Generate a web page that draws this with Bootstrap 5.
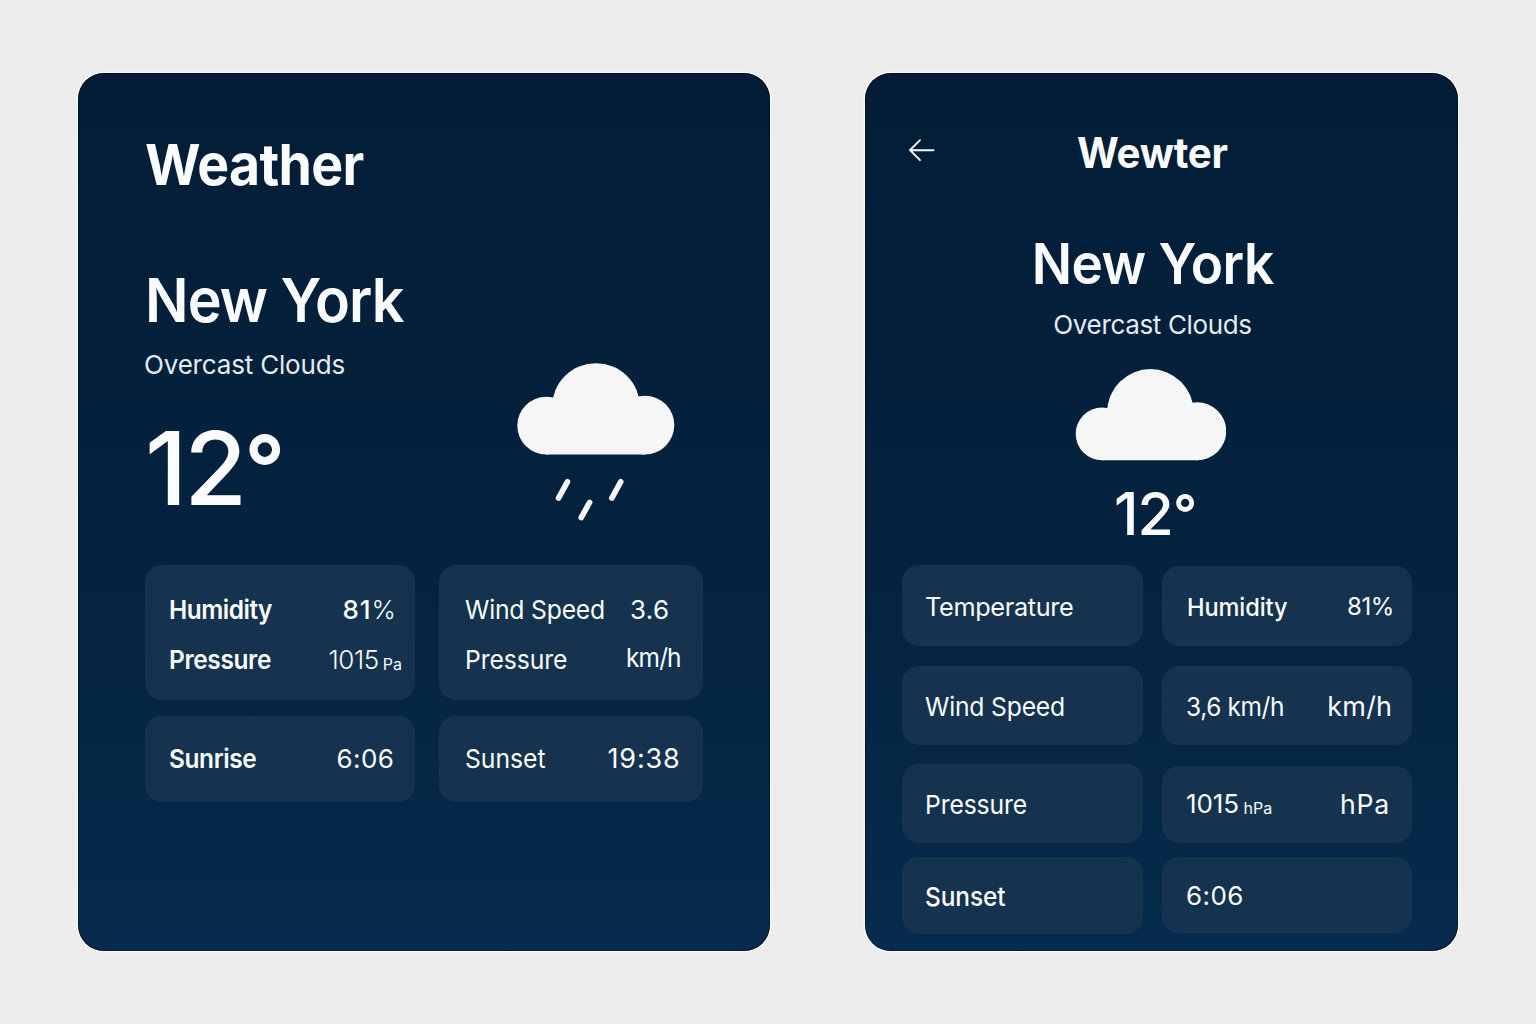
<!DOCTYPE html>
<html lang="en">
<head>
<meta charset="utf-8">
<meta name="viewport" content="width=device-width, initial-scale=1">
<title>Weather</title>
<link href="https://cdn.jsdelivr.net/npm/bootstrap@5.3.0/dist/css/bootstrap.min.css" rel="stylesheet">
<style>
body{width:1536px;height:1024px;background:#ececec;font-family:Inter,"Liberation Sans",sans-serif;font-size:26px;line-height:30px;color:#fafbfc;overflow:hidden}
.stage{padding:73px 0 0 78px;gap:95px}
.panel{height:878px;border-radius:26px;background:linear-gradient(180deg,#031d36 0%,#04213d 45%,#072b4c 100%);box-shadow:0 0 0 1.5px #f6f6f6,inset 0 0 0 1px rgba(0,6,28,.5)}
.panel-wide{width:692px;padding:62px 67px 0}
.panel-slim{width:592.5px;padding:49px 45.5px 0 37px}
.panel h1,.panel h2,.panel p{margin:0;white-space:nowrap}
.tile{background:#15334f;border-radius:17px;white-space:nowrap;box-shadow:inset 0 0 0 1px rgba(255,255,255,.012)}
.tile span{display:block}
.w3{font-weight:300}.w5{font-weight:500}.w6{font-weight:600}
.panel .sky{color:#e3ebf1;font-weight:400;line-height:32px;letter-spacing:-.18px}
.unit{font-size:16px;line-height:20px}
/* condensed lettering */
.slim-type{transform:scaleX(.94);transform-origin:0 50%}
.slim-type-mid{transform:scaleX(.95);transform-origin:0 50%}
.ring{font-size:.88em;line-height:0;vertical-align:.058em;font-weight:600}

/* wide panel */
.app-name{font-size:57px;font-weight:700;line-height:60px;letter-spacing:-.7px}
.panel-wide .city{font-size:61px;font-weight:600;line-height:64px;letter-spacing:-.95px;padding-top:73px;margin-left:-.5px}
.panel-wide .sky{padding-top:16.5px;margin-left:-1px}
.panel-wide .degrees{font-size:102px;font-weight:500;line-height:104px;letter-spacing:-3px;padding-top:35.5px}
.rain{width:160px;height:160px;margin:227px 27px 0 0}
.wide-grid{display:grid;grid-template-columns:270px 264.5px;grid-template-rows:135px 86px;gap:15.5px 23.5px;margin-top:43px}
.wide-grid .tile{padding-left:24px;display:flex;flex-direction:column;justify-content:center}
.wide-grid .right-col{padding-left:26.5px}
.line{display:flex;align-items:center;height:50px}
.tile.two{padding-top:4px}
.line>:first-child{flex:none}

/* slim panel */
.back{width:27px;height:24px;margin:16px 0 0 6px}
.app-name-sm{font-size:42px;font-weight:700;line-height:61px;letter-spacing:-.3px;padding-left:142px}
.app-name-sm span{display:inline-block;transform:scaleX(.96);transform-origin:0 50%}
.panel-slim .city{font-size:56.5px;font-weight:600;line-height:60px;letter-spacing:-.55px;transform:scaleX(.94)}
.panel-slim .sky{letter-spacing:-.35px;margin-top:15px}
.panel-slim .degrees{font-size:59px;font-weight:500;line-height:60px;letter-spacing:-.8px;margin-top:22px;padding-left:5px}
.center-col{padding:51px 0 0 0;width:501px}
.cloud{width:151px;height:92px;margin:28px 4px 1px 0;display:block}
.slim-left{width:241px}
.slim-right{width:250px}
.slim-grid{gap:19px;margin-top:21px}
.slim-grid .tile{display:flex;align-items:center;padding:2px 0 0 23px}
.slim-grid .slim-right .tile{padding-left:24px}
.slim-left .tile:nth-child(1){height:81px}
.slim-left .tile:nth-child(2){height:79px;margin-top:20px}
.slim-left .tile:nth-child(3){height:79px;margin-top:19px}
.slim-left .tile:nth-child(4){height:77px;margin-top:14px}
.slim-right .tile:nth-child(1){height:80px;margin-top:1px;padding-top:1px}
.slim-right .tile:nth-child(2){height:79px;margin-top:20px}
.slim-grid .slim-right .tile:nth-child(3){height:77.5px;margin-top:20.5px;padding-top:0}
.slim-right .tile:nth-child(4){height:76px;margin-top:14px}
</style>
<script src="https://cdn.jsdelivr.net/npm/bootstrap@5.3.0/dist/js/bootstrap.bundle.min.js"></script>
</head>
<body>
<main class="stage d-flex align-items-start">

  <section class="panel panel-wide flex-shrink-0">
    <div class="d-flex justify-content-between">
      <div>
        <h1 class="app-name slim-type">Weather</h1>
        <h2 class="city slim-type">New York</h2>
        <p class="sky">Overcast Clouds</p>
        <p class="degrees">12<span class="ring">°</span></p>
      </div>
      <svg class="rain flex-shrink-0" viewBox="516 362 160 160" role="img" aria-label="Rain">
        <g fill="#f6f6f7"><circle cx="546.2" cy="425.6" r="28.9"/><circle cx="596" cy="407.2" r="44"/><circle cx="644.9" cy="425.1" r="29.4"/><path d="M553 397.8h86l6 56.7H546z"/></g>
        <path d="M567.4 481.8l-8.9 16.3M589.6 502.4l-8.4 15.2M620.7 481.8l-8.9 16.3" stroke="#f6f6f7" stroke-width="5.6" stroke-linecap="round"/>
      </svg>
    </div>
    <div class="wide-grid">
      <div class="tile two">
        <div class="line"><span class="w6 slim-type" style="width:173.5px;letter-spacing:-.5px">Humidity</span><span class="w5" style="letter-spacing:.9px">81<span class="w3 d-inline">%</span></span></div>
        <div class="line"><span class="w6 slim-type" style="width:159.5px;letter-spacing:-.37px">Pressure</span><span class="w3" style="letter-spacing:-.4px">1015</span><span class="unit ms-1 mt-2">Pa</span></div>
      </div>
      <div class="tile two right-col">
        <div class="line"><span class="slim-type-mid" style="width:165px;letter-spacing:-.2px">Wind Speed</span><span style="letter-spacing:.3px">3.6</span></div>
        <div class="line"><span class="slim-type-mid" style="width:160.5px;letter-spacing:-.1px">Pressure</span><span class="mb-1 slim-type" style="letter-spacing:-.9px">km/h</span></div>
      </div>
      <div class="tile"><div class="line"><span class="w6 slim-type" style="width:167.5px;letter-spacing:-.4px">Sunrise</span><span style="letter-spacing:.4px">6:06</span></div></div>
      <div class="tile right-col"><div class="line"><span class="slim-type-mid" style="width:142.5px">Sunset</span><span style="font-size:27px;letter-spacing:.85px">19:38</span></div></div>
    </div>
  </section>

  <section class="panel panel-slim flex-shrink-0">
    <header class="d-flex align-items-start">
      <svg class="back flex-shrink-0" viewBox="0 0 27 24" fill="none" stroke="#f8fafc" stroke-width="1.9" stroke-linecap="round" stroke-linejoin="round" role="img" aria-label="Back"><path d="M25.5 12.2H2M12 2.2l-10 10 10 10"/></svg>
      <h1 class="app-name-sm"><span>Wewter</span></h1>
    </header>
    <div class="center-col d-flex flex-column align-items-center">
      <h2 class="city">New York</h2>
      <p class="sky">Overcast Clouds</p>
      <svg class="cloud" viewBox="1075 370 151 92" role="img" aria-label="Cloudy">
        <g fill="#f6f6f7"><circle cx="1102" cy="434.9" r="26.3"/><circle cx="1150.4" cy="413.4" r="43.3"/><circle cx="1197.2" cy="432.2" r="29"/><path d="M1107 408.6l86-3 5 55.6h-96z"/></g>
      </svg>
      <p class="degrees">12<span class="ring">°</span></p>
    </div>
    <div class="slim-grid d-flex align-items-start">
      <div class="slim-left">
        <div class="tile"><span style="font-size:25.3px;letter-spacing:-.35px">Temperature</span></div>
        <div class="tile"><span class="slim-type-mid" style="letter-spacing:-.2px">Wind Speed</span></div>
        <div class="tile"><span class="slim-type-mid" style="letter-spacing:-.15px">Pressure</span></div>
        <div class="tile"><span class="w5 slim-type" style="letter-spacing:-.1px">Sunset</span></div>
      </div>
      <div class="slim-right">
        <div class="tile"><span class="w5 slim-type-mid" style="font-size:24.8px;width:160px;margin-left:1px;letter-spacing:-.1px">Humidity</span><span style="font-size:24px;letter-spacing:-.4px">81%</span></div>
        <div class="tile"><span class="slim-type" style="width:141.3px;letter-spacing:-.4px">3,6 km/h</span><span style="font-size:27px;letter-spacing:.2px">km/h</span></div>
        <div class="tile"><span style="width:54px;letter-spacing:-.1px">1015</span><span class="unit mt-2" style="width:96.5px;margin-left:3.5px">hPa</span><span style="font-size:26.6px;letter-spacing:.8px">hPa</span></div>
        <div class="tile"><span style="letter-spacing:.4px">6:06</span></div>
      </div>
    </div>
  </section>

</main>
</body>
</html>
